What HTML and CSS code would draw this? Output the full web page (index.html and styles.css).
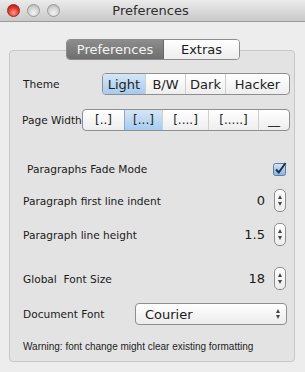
FILE: index.html
```html
<!DOCTYPE html>
<html lang="en">

<head>
    <meta charset="UTF-8">
    <title>Preferences</title>
    <link rel="stylesheet" href="styles.css">
</head>

<body>
    <div class="window">
        <div class="titlebar">
            <div class="lights">
                <span class="light red"></span>
                <span class="light"></span>
                <span class="light"></span>
            </div>
            <div class="title">Preferences</div>
        </div>

        <div class="pane">
            <div class="tabs">
                <span class="tab selected">Preferences</span>
                <span class="tab">Extras</span>
            </div>

            <div class="group">
                <div class="row theme-row">
                    <span class="label">Theme</span>
                    <div class="segmented theme">
                        <span class="seg on">Light</span>
                        <span class="seg">B/W</span>
                        <span class="seg">Dark</span>
                        <span class="seg">Hacker</span>
                    </div>
                </div>

                <div class="row width-row">
                    <span class="label">Page Width</span>
                    <div class="segmented widths">
                        <span class="seg">[..]</span>
                        <span class="seg on">[...]</span>
                        <span class="seg">[....]</span>
                        <span class="seg">[.....]</span>
                        <span class="seg">__</span>
                    </div>
                </div>

                <div class="row fade-row">
                    <span class="label">Paragraphs Fade Mode</span>
                    <svg class="check" width="14" height="14" viewBox="0 0 14 14">
                        <defs>
                            <linearGradient id="cb" x1="0" y1="0" x2="0" y2="1">
                                <stop offset="0" stop-color="#d6e6f7" />
                                <stop offset="1" stop-color="#86b3e3" />
                            </linearGradient>
                        </defs>
                        <rect x="0.5" y="1.5" width="12" height="12" rx="2" fill="url(#cb)" stroke="#5e7d9e" />
                        <path d="M3 7.5 L5.8 10.5 L12.5 1" fill="none" stroke="#1d2f4a" stroke-width="2" />
                    </svg>
                </div>

                <div class="row step-row indent-row">
                    <span class="label">Paragraph first line indent</span>
                    <span class="value">0</span>
                    <span class="stepper"><i class="up"></i><i class="down"></i></span>
                </div>

                <div class="row step-row">
                    <span class="label">Paragraph line height</span>
                    <span class="value">1.5</span>
                    <span class="stepper"><i class="up"></i><i class="down"></i></span>
                </div>

                <div class="row step-row size-row">
                    <span class="label">Global&nbsp; Font Size</span>
                    <span class="value">18</span>
                    <span class="stepper"><i class="up"></i><i class="down"></i></span>
                </div>

                <div class="row font-row">
                    <span class="label">Document Font</span>
                    <div class="popup">
                        <span>Courier</span>
                        <span class="arrows"><i class="up"></i><i class="down"></i></span>
                    </div>
                </div>

                <div class="warning">Warning: font change might clear existing formatting</div>
            </div>
        </div>
    </div>
</body>

</html>
```

FILE: styles.css
```css
* {
    margin: 0;
    padding: 0;
    box-sizing: border-box;
}

body {
    width: 305px;
    height: 372px;
    overflow: hidden;
    background: #ececec;
    font-family: 'DejaVu Sans', 'Liberation Sans', sans-serif;
    color: #1a1a1a;
}

.window {
    height: 372px;
    background: #ededed;
}

/* title bar */

.titlebar {
    height: 22px;
    display: flex;
    align-items: center;
    background: linear-gradient(#ebebeb, #c9c9c9);
    border-bottom: 1px solid #9c9c9c;
    position: relative;
}

.lights {
    display: flex;
    gap: 7px;
    padding-left: 7px;
}

.light {
    width: 13px;
    height: 13px;
    border-radius: 50%;
    background: radial-gradient(circle at 50% 70%, #f4f4f4 0%, #cfcfcf 60%, #a9a9a9 100%);
    border: 1px solid #9a9a9a;
}

.light.red {
    background: radial-gradient(circle at 50% 70%, #ff9c8e 0%, #e5322a 55%, #a8130d 100%);
    border-color: #8c2a22;
}

.title {
    flex: 1;
    text-align: center;
    font-size: 13px;
    color: #2e2e2e;
    margin-right: 58px;
    margin-left: -6px;
}

/* tab view */

.pane {
    padding: 17px 10px 0 9px;
}

.tabs {
    display: flex;
    width: 174px;
    height: 21px;
    margin: 0 0 -10px 57px;
    position: relative;
    z-index: 1;
    border: 1px solid #8c8c8c;
    border-radius: 4px;
    overflow: hidden;
    font-size: 13px;
}

.tab {
    display: flex;
    align-items: center;
    justify-content: center;
    background: linear-gradient(#ffffff, #ededed);
}

.tab.selected {
    width: 97px;
    background: linear-gradient(#8d8d8d, #6e6e6e);
    color: #f4f4f4;
    border-right: 1px solid #666;
}

.tab + .tab {
    flex: 1;
}

.group {
    height: 312px;
    background: #e3e3e3;
    border: 1px solid #c7c7c7;
    border-radius: 4px;
    padding: 22px 4px 0 13px;
}

.row {
    display: flex;
    align-items: center;
    font-size: 10.6px;
    white-space: nowrap;
}

.theme-row {
    height: 22px;
}

.width-row {
    height: 22px;
    margin-top: 14px;
    margin-left: -1px;
}

.segmented {
    display: flex;
    flex-shrink: 0;
    margin-left: auto;
    height: 22px;
    border: 1px solid #8f8f8f;
    border-radius: 4px;
    overflow: hidden;
    background: linear-gradient(#ffffff, #eeeeee);
}

.seg {
    display: flex;
    align-items: center;
    justify-content: center;
    border-left: 1px solid #cfcfcf;
    color: #222;
}

.seg:first-child {
    border-left: none;
}

.seg.on {
    background: linear-gradient(#d5e6f6, #a5cbef);
    border-color: #8aa9c8;
}

.theme {
    width: 188px;
    font-size: 13px;
}

.theme .seg:nth-child(1) { width: 42px; }
.theme .seg:nth-child(2) { width: 40px; }
.theme .seg:nth-child(3) { width: 40px; }
.theme .seg:nth-child(4) { flex: 1; }

.widths {
    width: 208px;
    font-size: 12px;
}

.widths .seg:nth-child(1) { width: 41px; }
.widths .seg:nth-child(2) { width: 38px; }
.widths .seg:nth-child(3) { width: 46px; }
.widths .seg:nth-child(4) { width: 50px; }
.widths .seg:nth-child(5) { flex: 1; }

.fade-row {
    height: 14px;
    margin-top: 31px;
    padding-left: 4px;
}

.check {
    margin-left: auto;
    margin-right: 3px;
}

.step-row {
    height: 23px;
    margin-top: 11px;
}

.indent-row {
    margin-top: 13px;
}

.size-row {
    margin-top: 21px;
}

.value {
    margin-left: auto;
    font-size: 13px;
    margin-right: 9px;
}

.stepper {
    width: 12px;
    height: 23px;
    border: 1px solid #8f8f8f;
    border-radius: 5px;
    background: linear-gradient(#ffffff, #ececec);
    display: flex;
    flex-direction: column;
    align-items: center;
    justify-content: center;
    gap: 3px;
    margin-right: 4px;
}

.up {
    width: 0;
    height: 0;
    border-left: 2.5px solid transparent;
    border-right: 2.5px solid transparent;
    border-bottom: 4px solid #444;
}

.down {
    width: 0;
    height: 0;
    border-left: 2.5px solid transparent;
    border-right: 2.5px solid transparent;
    border-top: 4px solid #444;
}

.font-row {
    height: 22px;
    margin-top: 13px;
}

.popup {
    margin-left: auto;
    margin-right: 3px;
    width: 152px;
    height: 22px;
    border: 1px solid #8f8f8f;
    border-radius: 4px;
    background: linear-gradient(#ffffff, #ececec);
    display: flex;
    align-items: center;
    padding: 0 6px 0 9px;
    font-size: 13px;
}

.arrows {
    margin-left: auto;
    display: flex;
    flex-direction: column;
    gap: 2px;
}

.warning {
    margin-top: 16px;
    font-family: 'Liberation Sans', Arial, sans-serif;
    font-size: 10px;
    color: #1e1e1e;
}
```
